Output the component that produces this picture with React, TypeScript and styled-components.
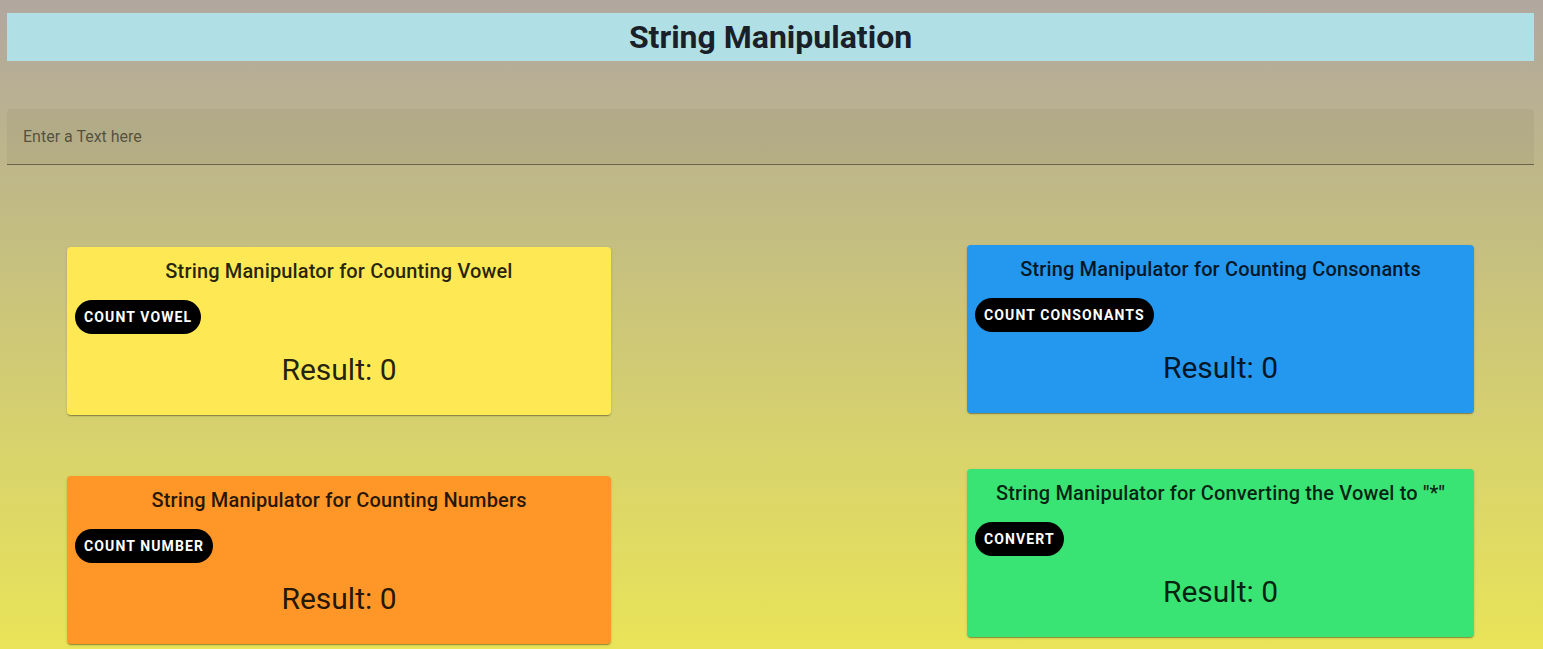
import React, { useState } from "react";
import styled, { createGlobalStyle } from "styled-components";

const GlobalStyle = createGlobalStyle`
  * {
    box-sizing: border-box;
  }

  body {
    margin: 0;
    font-family: Roboto, "Liberation Sans", sans-serif;
  }
`;

const Page = styled.div`
  min-height: 100vh;
  padding: 13px 9px 8px 7px;
  background: linear-gradient(to bottom, #b1a79f 0%, #bfb887 28%, #d6d16e 65%, #e9e457 100%);
`;

const Header = styled.header`
  display: flex;
  align-items: center;
  justify-content: center;
  height: 48px;
  background-color: #b0e0e6;
`;

const Title = styled.h1`
  margin: 0;
  font-size: 32px;
  line-height: 46px;
  font-weight: 700;
  color: #1a2027;
`;

const InputBox = styled.div`
  display: flex;
  align-items: center;
  margin-top: 48px;
  height: 56px;
  padding: 0 14px;
  border-radius: 4px 4px 0 0;
  border-bottom: 1px solid rgba(0, 0, 0, 0.42);
  background-color: rgba(0, 0, 0, 0.045);
`;

const InputEl = styled.input`
  width: 100%;
  border: none;
  outline: none;
  background-color: transparent;
  font-family: inherit;
  font-size: 16px;
  color: rgba(0, 0, 0, 0.87);

  &::placeholder {
    color: rgba(0, 0, 0, 0.55);
  }
`;

const CardsArea = styled.div`
  display: flex;
  padding-left: 60px;
`;

const Column = styled.div<{ $width: number; $top: number; $gap: number; $left?: number }>`
  display: flex;
  flex-direction: column;
  width: ${(p) => p.$width}px;
  margin-top: ${(p) => p.$top}px;
  margin-left: ${(p) => p.$left ?? 0}px;
  gap: ${(p) => p.$gap}px;
`;

const Card = styled.div<{ $bg: string }>`
  display: flex;
  flex-direction: column;
  height: 168px;
  padding: 8px;
  border-radius: 4px;
  background-color: ${(p) => p.$bg};
  box-shadow: 0 2px 1px -1px rgba(0, 0, 0, 0.2), 0 1px 1px 0 rgba(0, 0, 0, 0.14),
    0 1px 3px 0 rgba(0, 0, 0, 0.12);
`;

const CardTitle = styled.div`
  text-align: center;
  font-size: 20px;
  font-weight: 500;
  line-height: 32px;
  letter-spacing: 0.0075em;
  color: rgba(0, 0, 0, 0.85);
`;

const ActionButton = styled.button`
  align-self: flex-start;
  height: 34px;
  margin-top: 13px;
  padding: 0 9px;
  border: none;
  border-radius: 17px;
  background-color: #000;
  color: #fff;
  font-family: inherit;
  font-size: 14px;
  font-weight: 700;
  letter-spacing: 0.08em;
  text-transform: uppercase;
  cursor: pointer;
`;

const Result = styled.div`
  margin-top: 18px;
  text-align: center;
  font-size: 30px;
  line-height: 36px;
  color: rgba(0, 0, 0, 0.87);
`;

type ManipulatorProps = {
  title: string;
  label: string;
  bg: string;
  onRun: () => string | number;
};

const Manipulator = ({ title, label, bg, onRun }: ManipulatorProps) => {
  const [result, setResult] = useState<string | number>(0);

  return (
    <Card $bg={bg}>
      <CardTitle>{title}</CardTitle>
      <ActionButton onClick={() => setResult(onRun())}>{label}</ActionButton>
      <Result>Result: {result}</Result>
    </Card>
  );
};

const App = () => {
  const [text, setText] = useState<string>("");

  const countVowel = () => (text.match(/[aeiou]/gi) || []).length;
  const countConsonants = () => (text.match(/[b-df-hj-np-tv-z]/gi) || []).length;
  const countNumber = () => (text.match(/[0-9]/g) || []).length;
  const convert = () => text.replace(/[aeiou]/gi, "*");

  return (
    <Page>
      <GlobalStyle />
      <Header>
        <Title>String Manipulation</Title>
      </Header>
      <InputBox>
        <InputEl
          placeholder="Enter a Text here"
          value={text}
          onChange={(e: React.ChangeEvent<HTMLInputElement>) => setText(e.target.value)}
        />
      </InputBox>
      <CardsArea>
        <Column $width={544} $top={82} $gap={61}>
          <Manipulator
            title="String Manipulator for Counting Vowel"
            label="Count Vowel"
            bg="#fee854"
            onRun={countVowel}
          />
          <Manipulator
            title="String Manipulator for Counting Numbers"
            label="Count Number"
            bg="#fe9628"
            onRun={countNumber}
          />
        </Column>
        <Column $width={507} $top={80} $gap={56} $left={356}>
          <Manipulator
            title="String Manipulator for Counting Consonants"
            label="Count Consonants"
            bg="#2497ef"
            onRun={countConsonants}
          />
          <Manipulator
            title={'String Manipulator for Converting the Vowel to "*"'}
            label="Convert"
            bg="#3ae474"
            onRun={convert}
          />
        </Column>
      </CardsArea>
    </Page>
  );
};

export default App;
